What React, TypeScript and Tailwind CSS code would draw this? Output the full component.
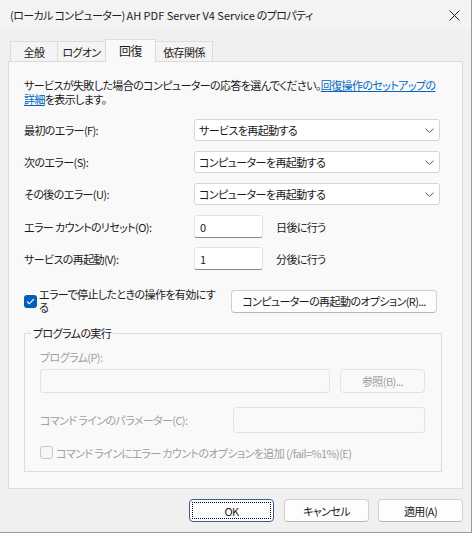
import { useState } from "react";

const font = "font-['Noto_Sans_CJK_JP',sans-serif] [font-feature-settings:'palt']";

function Chevron() {
  return (
    <svg width="9" height="5" viewBox="0 0 9 5" className="shrink-0">
      <polyline points="0.5,0.5 4.5,4.5 8.5,0.5" fill="none" stroke="#5d5d5d" strokeWidth="1" />
    </svg>
  );
}

function Combo({ value }: { value: string }) {
  return (
    <div className="w-[246px] h-[22px] bg-white border border-[#d5d5d5] rounded-[3px] flex items-center justify-between pl-[4px] pr-[5px]">
      <span className="whitespace-nowrap">{value}</span>
      <Chevron />
    </div>
  );
}

function Row({ label, children }: { label: string; children: React.ReactNode }) {
  return (
    <div className="flex items-center whitespace-nowrap">
      <div className="w-[170px]">{label}</div>
      {children}
    </div>
  );
}

function NumBox({ value }: { value: string }) {
  return (
    <div className="w-[69px] h-[23px] bg-white border border-[#e3e3e3] border-b-[#8a8a8a] rounded-[3px] flex items-center px-[5px]">
      {value}
    </div>
  );
}

function Btn({ children, w, primary }: { children: React.ReactNode; w: string; primary?: boolean }) {
  return (
    <button
      className={`${w} h-[23px] rounded-[4px] bg-[#fdfdfd] border whitespace-nowrap ${
        primary ? "border-[#3f5b86]" : "border-[#d0d0d0] border-b-[#b8b8b8]"
      } flex items-center justify-center p-[2px]`}
    >
      <span
        className={`w-full h-full flex items-center justify-center ${
          primary ? "outline outline-1 outline-dotted outline-black -outline-offset-1" : ""
        }`}
      >
        {children}
      </span>
    </button>
  );
}

export default function App() {
  const [tab] = useState(2);
  const tabs = [
    { name: "全般", w: "w-[48px]" },
    { name: "ログオン", w: "w-[49px]" },
    { name: "回復", w: "w-[51px]" },
    { name: "依存関係", w: "w-[58px]" },
  ];

  return (
    <div
      className={`w-[472px] h-[533px] bg-[#f0f0f0] border-r border-b border-[#9a9a9a] text-[11px] leading-[14px] tracking-[-0.6px] text-[#1a1a1a] ${font}`}
    >
      {/* Title bar */}
      <div className="h-[30px] bg-[#f3f3f3] flex items-center justify-between pl-[10px] pr-[11px]">
        <span className="whitespace-nowrap">
          (ローカル コンピューター) <span className="tracking-[0px]">AH PDF Server V4 Service</span> のプロパティ
        </span>
        <svg width="11" height="11" viewBox="0 0 11 11">
          <path d="M0.5 0.5 L10.5 10.5 M10.5 0.5 L0.5 10.5" stroke="#1a1a1a" strokeWidth="1" />
        </svg>
      </div>

      <div className="pl-[8px] pt-[9px]">
        {/* Tabs */}
        <div className="h-[22px] flex items-end pl-[2px] whitespace-nowrap">
          {tabs.map((t, i) =>
            i === tab ? (
              <div
                key={t.name}
                className={`${t.w} -ml-px h-[23px] mb-[-1px] relative z-10 bg-[#f9f9f9] border border-b-0 border-[#dcdcdc] flex justify-center pt-[3px] text-[12px] leading-[15px]`}
              >
                {t.name}
              </div>
            ) : (
              <div
                key={t.name}
                className={`${t.w} ${i === 0 ? "" : "-ml-px"} h-[20px] bg-[#f4f4f4] border border-b-0 border-[#dcdcdc] flex items-center justify-center`}
              >
                {t.name}
              </div>
            )
          )}
        </div>

        {/* Panel */}
        <div className="w-[455px] h-[428px] bg-[#f9f9f9] border border-[#dcdcdc] px-[15px] pt-[16px]">
          <p className="whitespace-nowrap">
            サービスが失敗した場合のコンピューターの応答を選んでください。
            <a href="#" className="text-[#0067c0] underline">
              回復操作のセットアップの
              <br />
              詳細
            </a>
            を表示します。
          </p>

          <div className="mt-[13px] flex flex-col gap-[10px]">
            <Row label="最初のエラー(F):">
              <Combo value="サービスを再起動する" />
            </Row>
            <Row label="次のエラー(S):">
              <Combo value="コンピューターを再起動する" />
            </Row>
            <Row label="その後のエラー(U):">
              <Combo value="コンピューターを再起動する" />
            </Row>
          </div>

          <div className="mt-[10px] flex flex-col gap-[9px]">
            <Row label="エラー カウントのリセット(O):">
              <NumBox value="0" />
              <span className="ml-[13px]">日後に行う</span>
            </Row>
            <Row label="サービスの再起動(V):">
              <NumBox value="1" />
              <span className="ml-[13px]">分後に行う</span>
            </Row>
          </div>

          {/* Enable actions checkbox */}
          <div className="mt-[19px] flex items-center h-[24px] whitespace-nowrap">
            <div className="w-[13px] h-[13px] rounded-[3px] bg-[#005fb8] flex items-center justify-center shrink-0">
              <svg width="9" height="7" viewBox="0 0 9 7">
                <polyline points="1,3.5 3.3,5.8 8,1" fill="none" stroke="white" strokeWidth="1.1" />
              </svg>
            </div>
            <span className="ml-[2px] w-[192px] leading-[13px]">
              エラーで停止したときの操作を有効にす
              <br />る
            </span>
            <Btn w="w-[206px]">コンピューターの再起動のオプション(R)...</Btn>
          </div>

          {/* Run program group */}
          <fieldset className="mt-[13px] w-[418px] border border-[#dcdcdc] pb-[12px]">
            <legend className="ml-[6px] px-[2px]">プログラムの実行</legend>
            <div className="px-[15px] whitespace-nowrap">
              <div className="mt-[10px] text-[#a0a0a0]">プログラム(P):</div>
              <div className="mt-[5px] flex items-center">
                <div className="w-[290px] h-[24px] border border-[#e3e3e3] rounded-[3px] bg-[#f9f9f9]" />
                <div className="ml-[10px] w-[85px] h-[24px] border border-[#e3e3e3] rounded-[4px] bg-[#f9f9f9] flex items-center justify-center text-[#a0a0a0]">
                  参照(B)...
                </div>
              </div>
              <div className="mt-[14px] flex items-center">
                <div className="w-[193px] text-[#a0a0a0]">コマンド ラインのパラメーター(C):</div>
                <div className="w-[192px] h-[26px] border border-[#e3e3e3] rounded-[3px] bg-[#f9f9f9]" />
              </div>
              <div className="mt-[13px] flex items-center h-[13px]">
                <div className="w-[13px] h-[13px] rounded-[3px] border border-[#c6c6c6] bg-[#f6f6f6] shrink-0" />
                <span className="ml-[3px] text-[#a0a0a0]">
                  コマンド ラインにエラー カウントのオプションを追加 (/fail=%1%)(E)
                </span>
              </div>
            </div>
          </fieldset>
        </div>

        {/* Dialog buttons */}
        <div className="mt-[10px] flex justify-end pr-[8px]">
          <Btn w="w-[85px]" primary>
            OK
          </Btn>
          <div className="ml-[10px]">
            <Btn w="w-[85px]">キャンセル</Btn>
          </div>
          <div className="ml-[9px]">
            <Btn w="w-[85px]">適用(A)</Btn>
          </div>
        </div>
      </div>
    </div>
  );
}
